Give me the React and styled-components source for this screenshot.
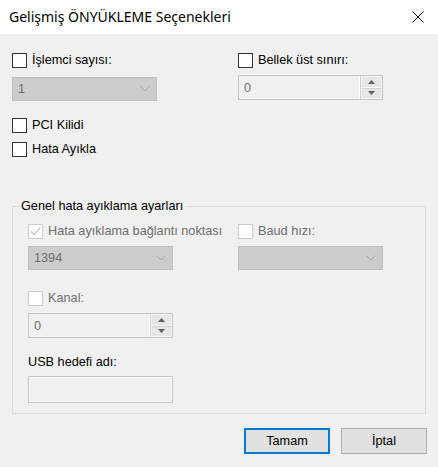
import React from 'react'
import styled, { createGlobalStyle } from 'styled-components'

const GlobalStyle = createGlobalStyle`
  html, body {
    margin: 0;
    padding: 0;
    background: #f0f0f0;
  }
  body {
    font-family: "Liberation Sans", Arial, sans-serif;
    font-size: 12.7px;
    color: #000;
  }
`

const Dialog = styled.div`
  width: 438px;
  height: 467px;
  background: #f0f0f0;
  display: flex;
  flex-direction: column;
  overflow: hidden;
`

const TitleBar = styled.div`
  height: 34px;
  background: #fff;
  display: flex;
  align-items: center;
  justify-content: space-between;
  padding: 0 14px 0 9px;
  box-sizing: border-box;
  flex-shrink: 0;
`

const Title = styled.div`
  font-family: "Noto Sans", "Open Sans", sans-serif;
  font-size: 14px;
  color: #000;
  padding-bottom: 1px;
`

const CloseIcon = () => (
  <svg width="12" height="12" viewBox="0 0 12 12">
    <path d="M0.5 0.5 L11.5 11.5 M11.5 0.5 L0.5 11.5" stroke="#000" strokeWidth="1" fill="none" />
  </svg>
)

const Body = styled.div`
  padding: 19px 12px 0 12px;
  display: flex;
  flex-direction: column;
`

const TwoCols = styled.div`
  display: grid;
  grid-template-columns: 226px 1fr;
`

const Stack = styled.div`
  display: flex;
  flex-direction: column;
  margin-top: ${p => p.$mt || 0}px;
`

const CheckRow = styled.label`
  display: flex;
  align-items: center;
  height: 15px;
  gap: 5px;
  margin-top: ${p => p.$mt || 0}px;
  color: ${p => (p.$disabled ? '#6d6d6d' : '#000')};
  white-space: nowrap;
  line-height: 15px;
`

const Box = styled.span`
  width: 15px;
  height: 15px;
  box-sizing: border-box;
  flex-shrink: 0;
  background: #fff;
  border: 1px solid ${p => (p.$disabled ? '#cccccc' : '#333333')};
  display: flex;
  align-items: center;
  justify-content: center;
`

const Checkbox = ({ label, checked, disabled, mt }) => (
  <CheckRow $disabled={disabled} $mt={mt}>
    <Box $disabled={disabled}>
      {checked && (
        <svg width="11" height="9" viewBox="0 0 11 9">
          <path d="M1 4.5 L4 7.5 L10 1" stroke={disabled ? '#c4c4c4' : '#000'} strokeWidth="1.3" fill="none" />
        </svg>
      )}
    </Box>
    {label}
  </CheckRow>
)

const Combo = styled.div`
  width: 145px;
  height: 24px;
  box-sizing: border-box;
  margin-top: ${p => p.$mt || 0}px;
  background: #cccccc;
  border: 1px solid #bfbfbf;
  display: flex;
  align-items: center;
  justify-content: space-between;
  padding: 0 6px 0 5px;
  color: #6d6d6d;
`

const Chevron = () => (
  <svg width="10" height="6" viewBox="0 0 10 6">
    <path d="M0.5 0.5 L5 5 L9.5 0.5" stroke="#a6a6a6" strokeWidth="1" fill="none" />
  </svg>
)

const ComboBox = ({ value, mt }) => (
  <Combo $mt={mt}>
    <span>{value}</span>
    <Chevron />
  </Combo>
)

const Spin = styled.div`
  width: 145px;
  height: 25px;
  box-sizing: border-box;
  margin-top: ${p => p.$mt || 0}px;
  background: #f0f0f0;
  border: 1px solid #c6c6c6;
  display: flex;
  color: #6d6d6d;
`

const SpinValue = styled.div`
  flex: 1;
  display: flex;
  align-items: center;
  padding-left: 5px;
  border-right: 1px solid #fff;
`

const SpinButtons = styled.div`
  width: 21px;
  display: flex;
  flex-direction: column;
  border-left: 1px solid #d0d0d0;
`

const SpinButton = styled.div`
  flex: 1;
  display: flex;
  align-items: center;
  justify-content: center;
  background: #e6e6e6;
  border: 1px solid #f4f4f4;
  border-top: ${p => (p.$down ? '1px solid #d4d4d4' : '1px solid #f4f4f4')};
`

const Arrow = ({ down }) => (
  <svg width="7" height="4" viewBox="0 0 7 4">
    <path d={down ? 'M0 0 L7 0 L3.5 4 Z' : 'M0 4 L7 4 L3.5 0 Z'} fill="#606060" />
  </svg>
)

const SpinBox = ({ value, mt }) => (
  <Spin $mt={mt}>
    <SpinValue>{value}</SpinValue>
    <SpinButtons>
      <SpinButton>
        <Arrow />
      </SpinButton>
      <SpinButton $down>
        <Arrow down />
      </SpinButton>
    </SpinButtons>
  </Spin>
)

const Group = styled.fieldset`
  margin: 42px 0 0 0;
  padding: 10px 15px 10px 15px;
  border: 1px solid #dcdcdc;
  min-width: 0;
`

const Legend = styled.legend`
  margin-left: -9px;
  padding: 0 2px;
  line-height: 15px;
  height: 15px;
`

const Label = styled.div`
  height: 15px;
  line-height: 15px;
  margin-top: ${p => p.$mt || 0}px;
`

const TextBox = styled.div`
  width: 145px;
  height: 27px;
  box-sizing: border-box;
  margin-top: 6px;
  background: #f0f0f0;
  border: 1px solid #c6c6c6;
  box-shadow: inset 0 0 0 1px #fafafa;
`

const GroupCols = styled.div`
  display: grid;
  grid-template-columns: 210px 1fr;
`

const Footer = styled.div`
  display: flex;
  justify-content: flex-end;
  gap: 11px;
  padding: 14px 0 0 0;
  margin-right: -1px;
`

const Button = styled.button`
  width: 86px;
  height: 26px;
  box-sizing: border-box;
  background: #e1e1e1;
  border: ${p => (p.$primary ? '2px solid #0078d7' : '1px solid #adadad')};
  font-family: "Liberation Sans", Arial, sans-serif;
  font-size: 12.7px;
  color: #000;
  padding: 0;
  margin: 0;
`

export default function App() {
  return (
    <>
      <GlobalStyle />
      <Dialog>
        <TitleBar>
          <Title>Gelişmiş ÖNYÜKLEME Seçenekleri</Title>
          <CloseIcon />
        </TitleBar>
        <Body>
          <TwoCols>
            <Stack>
              <Checkbox label="İşlemci sayısı:" />
              <ComboBox value="1" mt={9} />
            </Stack>
            <Stack>
              <Checkbox label="Bellek üst sınırı:" />
              <SpinBox value="0" mt={7} />
            </Stack>
          </TwoCols>
          <Checkbox label="PCI Kilidi" mt={17} />
          <Checkbox label="Hata Ayıkla" mt={9} />
          <Group>
            <Legend>Genel hata ayıklama ayarları</Legend>
            <GroupCols>
              <Stack>
                <Checkbox label="Hata ayıklama bağlantı noktası" checked disabled />
                <ComboBox value="1394" mt={7} />
              </Stack>
              <Stack>
                <Checkbox label="Baud hızı:" disabled />
                <ComboBox value="" mt={7} />
              </Stack>
            </GroupCols>
            <Checkbox label="Kanal:" disabled mt={21} />
            <SpinBox value="0" mt={7} />
            <Label $mt={17}>USB hedefi adı:</Label>
            <TextBox />
          </Group>
          <Footer>
            <Button $primary>Tamam</Button>
            <Button>İptal</Button>
          </Footer>
        </Body>
      </Dialog>
    </>
  )
}
